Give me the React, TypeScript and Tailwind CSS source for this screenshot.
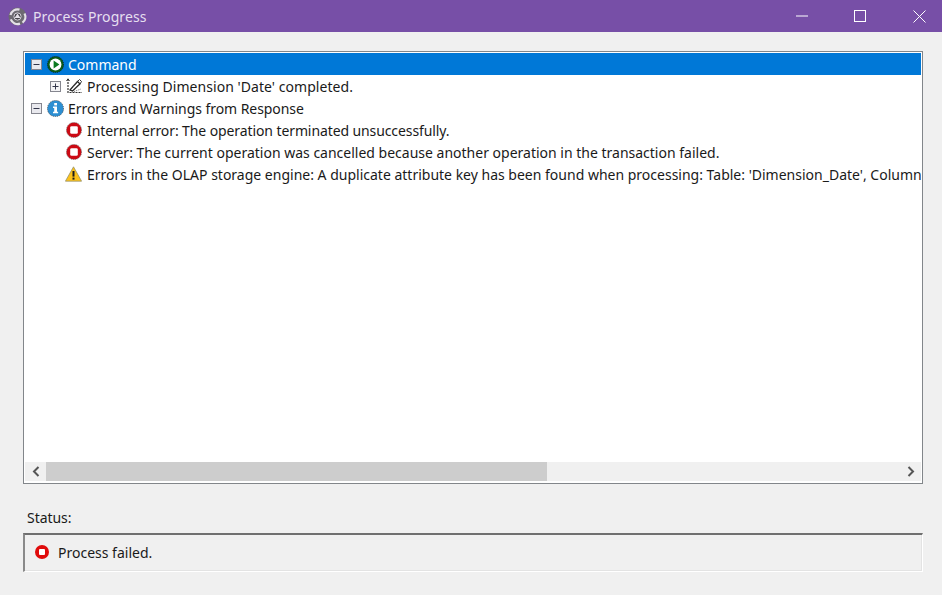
import type { ReactNode } from "react";

function ExpandBox({ open }: { open: boolean }) {
  return (
    <svg width="11" height="11" viewBox="0 0 11 11" className="shrink-0">
      <rect x="0.5" y="0.5" width="10" height="10" fill={open ? "#e9e9ee" : "#f4f4f6"} stroke="#85868f" />
      <path d="M2.5 5.5h6" stroke="#33364a" />
      {!open && <path d="M5.5 2.5v6" stroke="#33364a" />}
    </svg>
  );
}

function StopIcon() {
  return (
    <svg width="16" height="16" viewBox="0 0 16 16" className="shrink-0">
      <circle cx="8" cy="8" r="7.6" fill="#cc0a14" stroke="#666" strokeWidth="0.8" strokeDasharray="1 1" />
      <rect x="4.2" y="4.2" width="7.6" height="7.6" rx="1.4" fill="#fff" />
    </svg>
  );
}

function StatusStopIcon() {
  return (
    <svg width="14" height="14" viewBox="0 0 14 14" className="shrink-0">
      <circle cx="7" cy="7" r="7" fill="#e00c0c" />
      <rect x="4" y="4" width="6" height="6" rx="1" fill="#fff" />
    </svg>
  );
}

function PlayIcon() {
  return (
    <svg width="17" height="17" viewBox="0 0 17 17" className="shrink-0">
      <circle cx="8.5" cy="8.5" r="8.1" fill="#0a5c18" stroke="#111" strokeWidth="0.8" strokeDasharray="1 1" />
      <circle cx="8.5" cy="8.5" r="5.9" fill="#fff" />
      <path d="M6.6 4.6 12.4 8.5 6.6 12.4z" fill="#0a7a20" />
    </svg>
  );
}

function InfoIcon() {
  return (
    <svg width="17" height="17" viewBox="0 0 17 17" className="shrink-0">
      <circle cx="8.5" cy="8.5" r="8.1" fill="#2d8fd2" stroke="#444" strokeWidth="0.8" strokeDasharray="1 1" />
      <rect x="7.2" y="3" width="2.8" height="2.4" fill="#fff" />
      <path d="M6 6.6h4v5.2h1.1v1.4H6v-1.4h1.2V8H6z" fill="#fff" />
    </svg>
  );
}

function WarnIcon() {
  return (
    <svg width="17" height="16" viewBox="0 0 17 16" className="shrink-0">
      <path d="M8.5.8 16.6 15.2H.4z" fill="#fdc21a" stroke="#8a8a6a" strokeWidth="0.7" />
      <rect x="7.5" y="5" width="2" height="5.6" fill="#1c1c1c" />
      <rect x="7.5" y="11.6" width="2" height="2" fill="#1c1c1c" />
    </svg>
  );
}

function ChartIcon() {
  return (
    <svg width="17" height="17" viewBox="0 0 17 17" className="shrink-0" fill="none">
      <path d="M2 1v13.5h14" stroke="#333" strokeWidth="1.2" strokeDasharray="2 1" />
      <path d="M.5 3 2 .8 3.5 3" stroke="#333" />
      <path d="M4 12 11.5 3.5l2.5 2.5L6.5 13z" fill="#fff" stroke="#222" strokeWidth="1.2" />
      <path d="M7 9l4-4.5M9 10.5l3.5-4" stroke="#555" />
      <path d="M11.5 3.5 13.5 1.5l2 2-1.5 2.5" stroke="#333" />
      <path d="M8 13.5 15 11" stroke="#777" strokeDasharray="1 1" />
    </svg>
  );
}

function Row({ indent, selected, children }: { indent: string; selected?: boolean; children: ReactNode }) {
  return (
    <div className={`h-[22px] flex items-center whitespace-nowrap ${indent} ${selected ? "bg-[#0078d7] text-white" : "text-[#1a1a1a]"}`}>
      {children}
    </div>
  );
}

export default function App() {
  return (
    <div className="w-[942px] h-[595px] overflow-hidden bg-[#f0f0f0] flex flex-col text-[14px] font-['Noto_Sans',sans-serif]">
      {/* Title bar */}
      <div className="h-8 shrink-0 bg-[#774fa7] flex items-center pl-[7px]">
        <svg width="21" height="21" viewBox="0 0 21 21" className="shrink-0" fill="none">
          <circle cx="10.5" cy="10.5" r="9" fill="#6d6a72" />
          <path d="M3.5 9a7.2 7.2 0 0 1 9-5.4M17.5 7.5a7.2 7.2 0 0 1-2 9.2M13 17.6a7.2 7.2 0 0 1-9.2-4.2" stroke="#e4e0e8" strokeWidth="2.2" />
          <circle cx="10.5" cy="10.5" r="3.6" fill="#45424a" stroke="#d6d2da" strokeWidth="1" />
          <path d="M10.5 7.5l3 4.5h-6z" fill="#e4e0e8" />
        </svg>
        <span className="ml-[5px] text-[#e6dff0] tracking-[0.1px]">Process Progress</span>
        <div className="ml-auto flex items-center">
          <div className="w-11 flex justify-center">
            <svg width="12" height="2" viewBox="0 0 12 2"><path d="M0 1h12" stroke="#fff" /></svg>
          </div>
          <div className="w-[72px] flex justify-center">
            <svg width="12" height="12" viewBox="0 0 12 12"><rect x="0.5" y="0.5" width="11" height="11" fill="none" stroke="#fff" /></svg>
          </div>
          <div className="w-[46px] flex justify-center">
            <svg width="13" height="13" viewBox="0 0 13 13"><path d="M.5.5l12 12M12.5.5l-12 12" stroke="#fff" /></svg>
          </div>
        </div>
      </div>

      {/* Tree panel */}
      <div className="mt-[19px] ml-[23px] w-[900px] h-[433px] shrink-0 border border-[#82868a] bg-white flex flex-col p-px">
        <div className="flex-1 min-h-0 overflow-hidden">
          <Row indent="pl-[6px]" selected>
            <ExpandBox open />
            <span className="ml-[5px]"><PlayIcon /></span>
            <span className="ml-[4px]">Command</span>
          </Row>
          <Row indent="pl-[25px]">
            <ExpandBox open={false} />
            <span className="ml-[5px]"><ChartIcon /></span>
            <span className="ml-[4px] tracking-[0.05px]">Processing Dimension 'Date' completed.</span>
          </Row>
          <Row indent="pl-[6px]">
            <ExpandBox open />
            <span className="ml-[5px]"><InfoIcon /></span>
            <span className="ml-[4px] tracking-[-0.06px]">Errors and Warnings from Response</span>
          </Row>
          <Row indent="pl-[41px]">
            <StopIcon />
            <span className="ml-[5px] tracking-[-0.1px]">Internal error: The operation terminated unsuccessfully.</span>
          </Row>
          <Row indent="pl-[41px]">
            <StopIcon />
            <span className="ml-[5px]">Server: The current operation was cancelled because another operation in the transaction failed.</span>
          </Row>
          <Row indent="pl-[40px]">
            <WarnIcon />
            <span className="ml-[5px]">Errors in the OLAP storage engine: A duplicate attribute key has been found when processing: Table: 'Dimension_Date', Column</span>
          </Row>
        </div>
        {/* Horizontal scrollbar */}
        <div className="h-[19px] mb-px shrink-0 bg-[#f0f0f0] flex items-stretch">
          <div className="w-[21px] flex items-center justify-center">
            <svg width="8" height="11" viewBox="0 0 8 11" fill="none"><path d="M6.5 1 2 5.5l4.5 4.5" stroke="#555" strokeWidth="2" /></svg>
          </div>
          <div className="w-[501px] bg-[#cdcdcd]" />
          <div className="flex-1" />
          <div className="w-[21px] flex items-center justify-center">
            <svg width="8" height="11" viewBox="0 0 8 11" fill="none"><path d="M1.5 1 6 5.5 1.5 10" stroke="#555" strokeWidth="2" /></svg>
          </div>
        </div>
      </div>

      {/* Status */}
      <div className="mt-[25px] ml-[27px] h-[18px] leading-[18px] tracking-[-0.05px] text-[#1a1a1a]">Status:</div>
      <div className="mt-[6px] ml-[23px] w-[900px] h-[39px] shrink-0 border-t-2 border-l-2 border-t-[#6f6f6f] border-l-[#8a8a8a] border-r border-b border-r-white border-b-white shadow-[inset_-1px_-1px_0_#e3e3e3] flex items-center pl-[10px] pb-[2px]">
        <StatusStopIcon />
        <span className="ml-[9px] text-[#1a1a1a]">Process failed.</span>
      </div>
    </div>
  );
}
